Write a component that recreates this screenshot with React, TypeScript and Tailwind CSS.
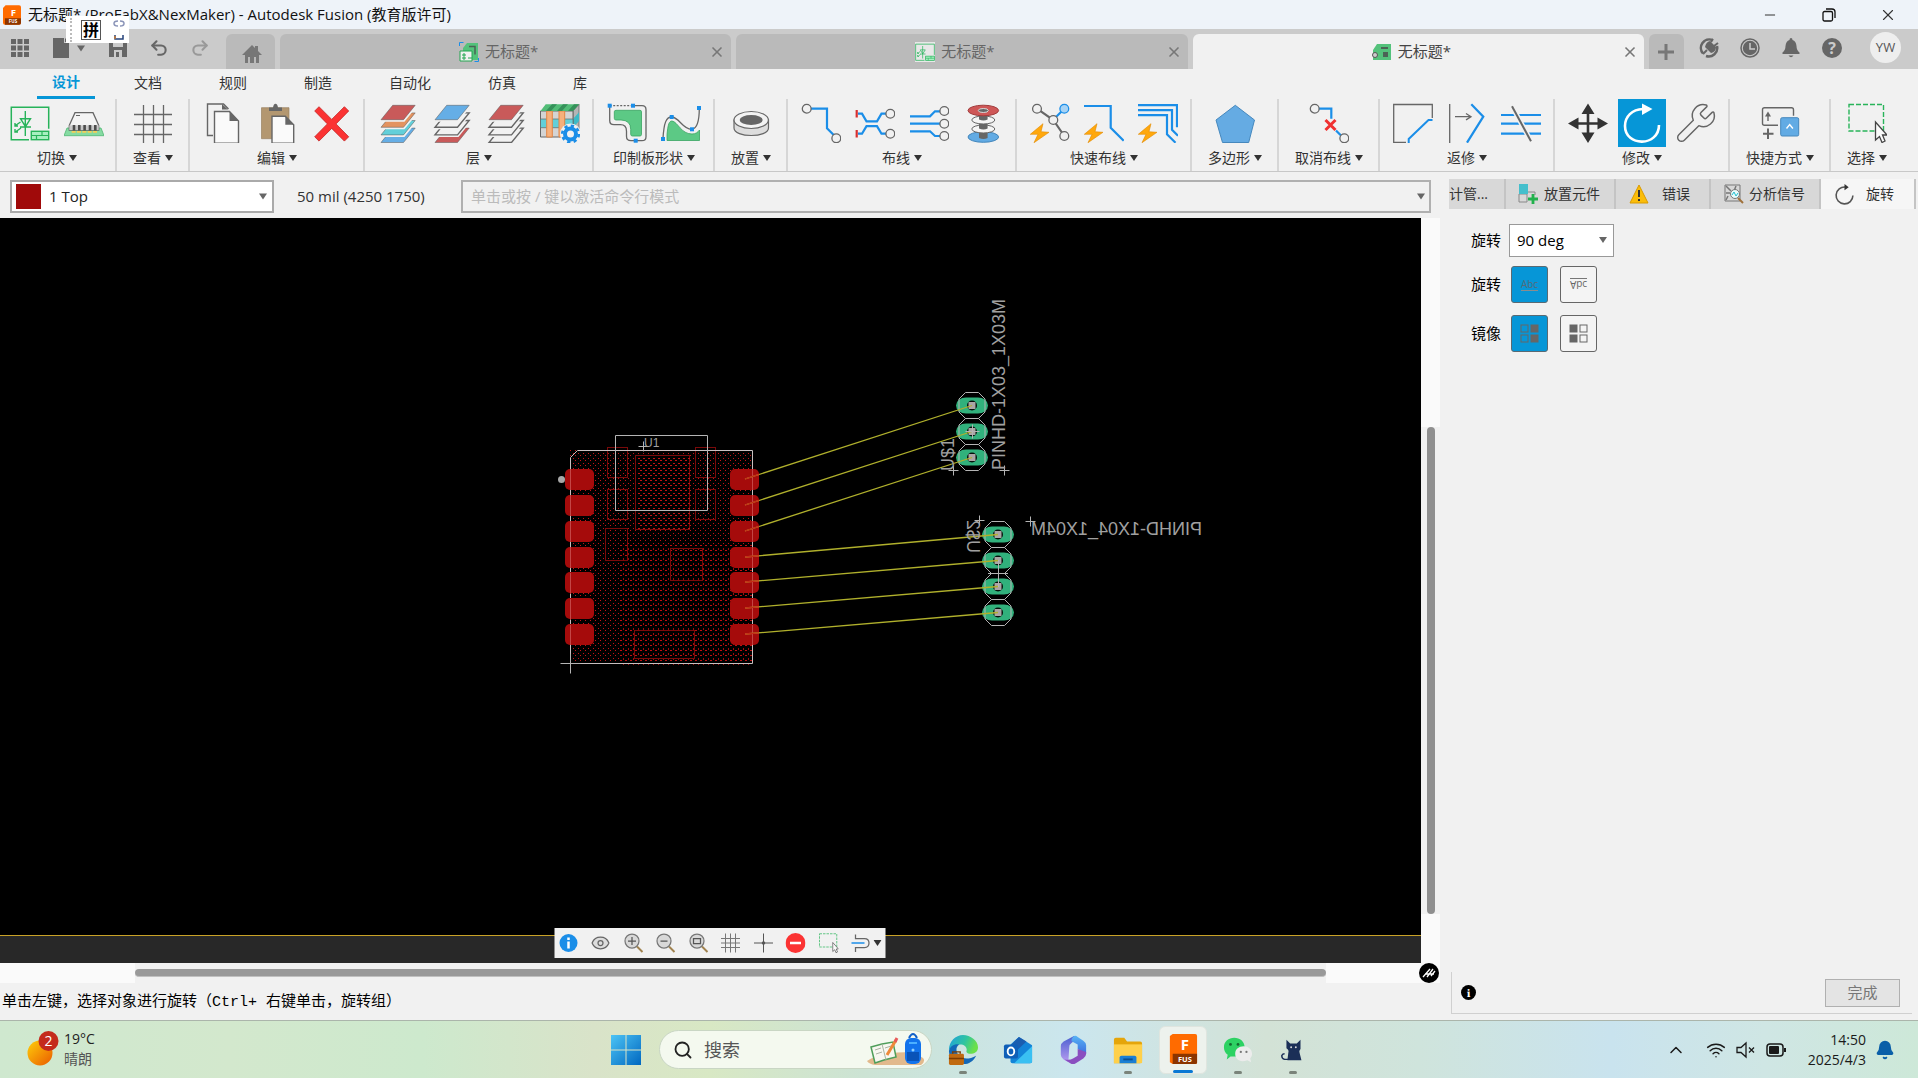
import React from "react";
import {
  Bell,
  ChevronUp,
  Eye,
  Minus,
  Redo2,
  Search,
  Undo2,
  Wifi,
  Wrench,
  X,
} from "lucide-react";

const GREY = "#666666";
const BLUE = "#1b8ee8";
const PAPER = "#f1f1f1";

function Icon({ children, className = "h-10 w-10" }: { children: React.ReactNode; className?: string }) {
  return (
    <svg viewBox="0 0 40 40" fill="none" className={className} aria-hidden="true">
      {children}
    </svg>
  );
}

/* ---------- ribbon icons ---------- */

function Schematic({ className }: { className?: string }) {
  return (
    <Icon className={className}>
      <path d="M19 36.7H1.3V4.3h37.4v21.5" stroke="#27b35a" strokeWidth="1.5" />
      <path d="M15.3 8v25M10.5 15.7h10l-5 8zM10 24h11M10.5 19l-5 3.5M5 20v3h3M11 25l-5 3.5M5 26v3h3" stroke="#27b35a" strokeWidth="1.4" />
      <rect x="21.3" y="28.3" width="17.4" height="8.4" fill="#a6efc0" stroke="#27b35a" strokeWidth="1.4" />
      <path d="M21.3 32.5h17.4M32 28.3v4.2M26.5 32.5v4.2" stroke="#27b35a" strokeWidth="1.2" />
    </Icon>
  );
}

function Chip() {
  return (
    <Icon>
      <path d="M3 25h34l3 7.7H0z" fill="#86dba2" stroke="#4fb873" strokeWidth="0.8" />
      <path d="M11 9.7h18l5.7 12.6v4.7H5.3v-4.7z" fill="#f4f4f4" stroke={GREY} strokeWidth="1.3" />
      <path d="M5.3 22.3h29.4v4.7H5.3z" fill="#c9c9c9" />
      {[8.7, 14, 19.3, 24.7, 30].map((x) => (
        <g key={x}>
          <rect x={x} y="22" width="2.6" height="5.5" fill="#4d4d4d" />
          <rect x={x - 1} y="28" width="4" height="1.8" fill="#f3cf5a" />
        </g>
      ))}
      <path d="M12 12.5h4" stroke={GREY} strokeWidth="1" />
    </Icon>
  );
}

function GridIcon() {
  return (
    <Icon>
      <path d="M10.5 2v38M20.5 2v38M30.5 2v38M1 11.5h38M1 21.5h38M1 31.5h38" stroke={GREY} strokeWidth="1.3" />
    </Icon>
  );
}

function Copy() {
  return (
    <Icon>
      <path d="M10 32.5H4.5v-31.500h16l5 5" stroke={GREY} strokeWidth="1.4" />
      <path d="M19 1l6 5.500h-6z" fill={GREY} />
      <path d="M11.5 8.5h15l9 9.500v22.300h-24z" fill="#fafafa" stroke={GREY} strokeWidth="1.4" />
      <path d="M26.5 8.5v9.500h9z" fill={GREY} />
    </Icon>
  );
}

function Paste() {
  return (
    <Icon>
      <path d="M4.5 4.7h27.500v31H4.5z" fill="#b39770" stroke="#9a8262" strokeWidth="0.7" />
      <path d="M12 4.5h4q.5-3.800 2.500-3.800t2.500 3.800h4v3.500h-13z" fill={GREY} />
      <path d="M15 13.3h13.300l8.400 8.400v18.600h-21.700z" fill="#fafafa" stroke={GREY} strokeWidth="1.4" />
      <path d="M28.3 13.3v8.400h8.400z" fill={GREY} />
    </Icon>
  );
}

function DeleteIcon() {
  return (
    <Icon>
      <path d="M8 3.7l12.700 12.700 12.700-12.700 4.300 4.300-12.700 12.900 12.700 12.900-4.300 4.300-12.700-12.700-12.700 12.700-4.300-4.300 12.700-12.900-12.700-12.900z" fill="#fb3333" stroke="#c42424" strokeWidth="0.8" />
    </Icon>
  );
}

function Layers({ colors }: { colors: string[] }) {
  return (
    <Icon>
      {[3, 2, 1, 0].map((i) => (
        <g key={i} transform={`translate(0 ${i * 7.6})`}>
          <path d="M14.7 2.3h22.500l-11.700 14.400h-22.500z" fill={PAPER} stroke={PAPER} strokeWidth="4" />
          <path
            d="M14.7 2.3h22.500l-11.700 14.400h-22.500z"
            fill={colors[i]}
            stroke={colors[i] === PAPER ? GREY : "#555555"}
            strokeWidth={colors[i] === PAPER ? 1.4 : 0.5}
          />
        </g>
      ))}
    </Icon>
  );
}

function LayerSettings() {
  return (
    <Icon>
      <path d="M33 8l6-6.700v26l-6 6.700z" fill="#b5b5b5" stroke={GREY} strokeWidth="0.8" />
      <path d="M33 16l6-6.700v8.700l-6 6.700z" fill="#3dbac6" />
      <path d="M.5 8h32.500v26H.5z" fill="#d4d4d4" stroke={GREY} strokeWidth="1" />
      <path d="M.5 16h32.500v8.700H.5z" fill="#62cfd9" stroke={GREY} strokeWidth="0.7" />
      <path d="M6.7 8h5.600v26h-5.600zM19 8h5.700v26h-5.700z" fill="#f6b07c" stroke="#e38543" strokeWidth="1" />
      <path d="M5.7 1.3h33.300l-6 6.700H.5z" fill="#52bd77" />
      <path d="M12 1.3h5l-6 6.700h-5zM23 1.3h5l-6 6.700h-5zM34 1.3h5l-6 6.700h-5z" fill="#35915a" />
      <circle cx="30.5" cy="31" r="10.5" fill={PAPER} />
      <circle cx="30.5" cy="31" r="5.5" stroke={BLUE} strokeWidth="4" />
      <circle cx="30.5" cy="31" r="8.3" stroke={BLUE} strokeWidth="2.6" strokeDasharray="3.26 3.26" />
    </Icon>
  );
}

function Square({ x, y }: { x: number; y: number }) {
  return <rect x={x - 2} y={y - 2} width="4" height="4" fill={BLUE} />;
}

function BoardShape() {
  return (
    <Icon>
      <path d="M9 7.3h24q1.500 0 1.500 1.500v22.500q0 1.700-1.500 1.700h-7.500q-1.800 0-1.800-1.700v-5q0-9-9.700-9.300h-5q-1.700 0-1.700-1.700v-6.500q0-1.500 1.700-1.500z" fill="#5cc985" stroke="#39a562" strokeWidth="0.8" />
      <path d="M2.7 2.7h23" stroke={GREY} strokeWidth="1.3" strokeDasharray="2 1.5" />
      <path d="M26 2.7h9q4 0 4 4v27q0 4-4 4h-11q-4.500 0-4.500-4.500v-5q0-6.500-6-6.500h-6.500q-4.300 0-4.300-4.200v-14.800" stroke={GREY} strokeWidth="1.3" />
      <Square x={2.7} y={2.7} />
      <Square x={26} y={2.7} />
      <Square x={28.7} y={37.7} />
    </Icon>
  );
}

function BoardCurve() {
  return (
    <Icon>
      <path d="M6 37.5v-6c1-10 2-13.500 5-13.500 6 1 9 13 20 13 4 0 6-2 7.500-4v10.500z" fill="#5cc985" stroke="#39a562" strokeWidth="0.8" />
      <path d="M2 35c1-15 3-21 8.700-21 7.300 0 11.300 13 20.300 12.300 6.500-1 7.300-12.300 7.300-21.300" stroke={GREY} strokeWidth="1.3" />
      <Square x={2} y={36} />
      <Square x={10.7} y={14} />
      <Square x={31} y={26.3} />
      <Square x={38} y={5} />
    </Icon>
  );
}

function Ring() {
  return (
    <Icon>
      <path d="M3 17v8c0 10 34.500 10 34.500 0v-8z" fill="#dddddd" stroke={GREY} strokeWidth="1.2" />
      <ellipse cx="20.2" cy="17" rx="17.2" ry="8.5" fill="#f3f3f3" stroke={GREY} strokeWidth="1.2" />
      <ellipse cx="20.2" cy="17" rx="11.5" ry="5" fill={GREY} />
    </Icon>
  );
}

function Node({ x, y, fill = PAPER, stroke = GREY }: { x: number; y: number; fill?: string; stroke?: string }) {
  return <circle cx={x} cy={y} r="4.4" fill={fill} stroke={stroke} strokeWidth="1.3" />;
}

function Route() {
  return (
    <Icon>
      <path d="M10 5.7h16v19.600l7 7" stroke={BLUE} strokeWidth="2.2" />
      <Node x={5.7} y={5.7} />
      <Node x={35.3} y={35.3} />
    </Icon>
  );
}

function RoutePair() {
  return (
    <Icon>
      <path d="M3 10.7h4l4.500 7.600h10.500l4.500-7.600h5M3 30.7h4l4.500-7.600h10.500l4.500 7.600h5" stroke={BLUE} strokeWidth="2.2" />
      <path d="M1.7 7v7.500M1.7 27v7.500" stroke="#d93030" strokeWidth="2.2" />
      <Node x={35.3} y={10.7} />
      <Node x={35.3} y={30.7} />
    </Icon>
  );
}

function RouteMulti() {
  return (
    <Icon>
      <path d="M1 13.3h20l5-5h6M1 20.7h31M1 28.3h20l5 4.700h6" stroke={BLUE} strokeWidth="2.2" />
      <Node x={35.3} y={8} />
      <Node x={35.3} y={20.7} />
      <Node x={35.3} y={33} />
    </Icon>
  );
}

function Via() {
  return (
    <Icon>
      <ellipse cx="20.3" cy="34" rx="15.3" ry="5.3" fill="#62abe4" stroke="#4386bb" />
      <path d="M16 28h8.600v7q-4 2-8.600 0z" fill={GREY} />
      <ellipse cx="20.3" cy="26" rx="11.5" ry="4" fill="#f5f5f5" stroke={GREY} />
      <path d="M16 19h8.600v6.500q-4 2-8.600 0z" fill={GREY} />
      <ellipse cx="20.3" cy="17" rx="11.5" ry="4" fill="#f5f5f5" stroke={GREY} />
      <path d="M16 11h8.600v5.500q-4 2-8.600 0z" fill={GREY} />
      <ellipse cx="20.3" cy="7.5" rx="15.3" ry="5.3" fill="#ce5757" stroke="#a13d3d" />
      <ellipse cx="20.3" cy="7.5" rx="5" ry="2" fill={GREY} stroke="#d9d9d9" />
    </Icon>
  );
}

function Bolt() {
  return <path d="M13 20.7l-12.700 10.600h7.700l-4 8.400 15-10.400-8-.6z" fill="#ffa80d" stroke="#e08a00" strokeWidth="0.6" />;
}

function QuickNet() {
  return (
    <Icon>
      <path d="M7 5.7l16.300 11.300 11 16" stroke={GREY} strokeWidth="2.2" />
      <path d="M24 16l10-10" stroke={BLUE} strokeWidth="2.2" />
      <Node x={7} y={5.7} />
      <Node x={23.3} y={17} />
      <Node x={34.3} y={5.7} fill="#a7d3f5" stroke={BLUE} />
      <Node x={34.3} y={33} />
      <Bolt />
    </Icon>
  );
}

function QuickRoute() {
  return (
    <Icon>
      <path d="M0 3h26.700v21.700l13 13" stroke={BLUE} strokeWidth="2.2" />
      <Bolt />
    </Icon>
  );
}

function QuickMulti() {
  return (
    <Icon>
      <path d="M0 2.2h39v22M0 7.2h34v19.500l6 6M0 12.2h29v19l8.500 8.500" stroke={BLUE} strokeWidth="2.2" />
      <Bolt />
    </Icon>
  );
}

function Pentagon() {
  return (
    <Icon>
      <path d="M20.3 2.3l19.200 14.700-5.800 22.500h-26.200l-6.500-22.500z" fill="#65abe3" stroke="#4688bd" />
    </Icon>
  );
}

function Unroute() {
  return (
    <Icon>
      <path d="M10 5.7h12.300v10M27 27.5l6 6" stroke={BLUE} strokeWidth="2.2" />
      <path d="M16.5 17l10 10M26.5 17l-10 10" stroke="#f03030" strokeWidth="3" />
      <Node x={5.7} y={5.7} />
      <Node x={35.3} y={35.3} />
    </Icon>
  );
}

function Miter() {
  return (
    <Icon>
      <path d="M13 39.3h-12.300v-37.800h38.600v13.500" stroke={GREY} strokeWidth="1.3" />
      <path d="M39.5 17h-4l-19.800 19v4" stroke={BLUE} strokeWidth="2" />
    </Icon>
  );
}

function Reroute() {
  return (
    <Icon>
      <path d="M2.7 1v39M8 13.7h15M19 10.5l5 3.200-5 3.200" stroke={GREY} strokeWidth="1.3" />
      <path d="M24.3 1.3l12 12.400-16.300 26" stroke={BLUE} strokeWidth="2.2" />
    </Icon>
  );
}

function Slice() {
  return (
    <Icon>
      <path d="M0 12h40M0 20.7h40M0 30.7h40" stroke={BLUE} strokeWidth="2.2" />
      <path d="M11 3.3l19 35" stroke={PAPER} strokeWidth="5" />
      <path d="M11 3.3l19 35" stroke={GREY} strokeWidth="2" />
    </Icon>
  );
}

function Move() {
  return (
    <Icon>
      <path d="M20 6v29M5 20.5h30" stroke="#333333" strokeWidth="2.6" />
      <path d="M20 .5l6.500 10.500h-13zM20 40l6.500-10.500h-13zM0 20.5l10.500-6v12zM40 20.5l-10.500-6v12z" fill="#333333" />
    </Icon>
  );
}

function Rotate() {
  return (
    <Icon>
      <path d="M37 22c0 22-34 22-34 1 0-9.500 7-16.500 18-17" stroke="#ffffff" strokeWidth="2.6" />
      <path d="M20 .5l10.500 5.500-10.500 6z" fill="#ffffff" />
    </Icon>
  );
}

function Shortcut() {
  return (
    <Icon>
      <path d="M18 22.3h-13.500q-2 0-2-2v-13.500q0-2 2-2h27q2 0 2 2v6M8 18v-7" stroke={GREY} strokeWidth="1.4" />
      <path d="M8 8.5l3 5h-6z" fill={GREY} />
      <path d="M8 25.5v10.500M3 30.7h10.500" stroke={GREY} strokeWidth="2" />
      <rect x="20.7" y="14.7" width="18" height="18.3" rx="1.5" fill="#62abe4" stroke="#4688bd" />
      <path d="M26.5 25.5l3.200-4 3.200 4" stroke="#ffffff" strokeWidth="1.4" />
    </Icon>
  );
}

function SelectBox({ className }: { className?: string }) {
  return (
    <Icon className={className}>
      <rect x="2" y="1.5" width="34.5" height="26.5" stroke="#28b45a" strokeWidth="1.4" strokeDasharray="5 2" />
      <path d="M28.5 19v18l4-3.500 2.500 6 3-1.500-2.500-6h4.500z" fill="#fafafa" stroke="#444444" strokeWidth="1.3" />
    </Icon>
  );
}

/* ---------- shared pieces ---------- */

function Caret({ className = "h-[6px] w-2 fill-[#333333]" }: { className?: string }) {
  return (
    <svg viewBox="0 0 8 6" className={className} aria-hidden="true">
      <path d="M0 0h8l-4 6z" />
    </svg>
  );
}

function FusionLogo({ className }: { className: string }) {
  return (
    <svg viewBox="0 0 28 30" className={className} aria-hidden="true">
      <path d="M4 0h21q3 0 3 3v24q0 3-3 3H3q-3 0-3-3V4z" fill="#ff6b00" />
      <path d="M3 20h25v7q0 3-3 3H3z" fill="#8c3500" />
      <text x="16" y="16" fontSize="15" fontWeight="700" textAnchor="middle" fill="#ffffff">F</text>
      <text x="15.5" y="28" fontSize="7" fontWeight="700" textAnchor="middle" fill="#ffffff">FUS</text>
    </svg>
  );
}

const groups: { label: string; icons: React.ReactNode[]; names: string[] }[] = [
  { label: "切换", names: ["原理图", "三维印制板"], icons: [<Schematic />, <Chip />] },
  { label: "查看", names: ["栅格"], icons: [<GridIcon />] },
  { label: "编辑", names: ["复制", "粘贴", "删除"], icons: [<Copy />, <Paste />, <DeleteIcon />] },
  {
    label: "层",
    names: ["所有层", "顶层和底层", "顶层", "层设置"],
    icons: [
      <Layers colors={["#c95a5a", "#e39360", "#62cfd9", "#65aee6"]} />,
      <Layers colors={["#65aee6", PAPER, PAPER, "#c95a5a"]} />,
      <Layers colors={["#c95a5a", PAPER, PAPER, PAPER]} />,
      <LayerSettings />,
    ],
  },
  { label: "印制板形状", names: ["轮廓", "样条"], icons: [<BoardShape />, <BoardCurve />] },
  { label: "放置", names: ["孔"], icons: [<Ring />] },
  { label: "布线", names: ["手动布线", "差分对", "多线布线", "过孔"], icons: [<Route />, <RoutePair />, <RouteMulti />, <Via />] },
  { label: "快速布线", names: ["快速飞线", "快速走线", "快速多线"], icons: [<QuickNet />, <QuickRoute />, <QuickMulti />] },
  { label: "多边形", names: ["覆铜"], icons: [<Pentagon />] },
  { label: "取消布线", names: ["取消"], icons: [<Unroute />] },
  { label: "返修", names: ["斜接", "重新布线", "切割"], icons: [<Miter />, <Reroute />, <Slice />] },
  {
    label: "修改",
    names: ["移动", "旋转对象", "更改"],
    icons: [<Move />, <Rotate />, <Wrench className="h-11 w-11 text-[#666666]" strokeWidth={0.8} />],
  },
  { label: "快捷方式", names: ["添加快捷方式"], icons: [<Shortcut />] },
  { label: "选择", names: ["选择组"], icons: [<SelectBox />] },
];

function Ribbon() {
  return (
    <div className="flex h-[73px] border-b border-[#c8c8c8]">
      {groups.map((g) => (
        <section
          key={g.label}
          className="flex flex-col items-center justify-between border-r-2 border-[#d6d6d6] pr-[5px] pb-[3px] pl-[6px] first:pl-[3px] first:pr-[4px] last:border-r-0"
        >
          <div className="flex">
            {g.icons.map((icon, i) => (
              <button
                key={g.names[i]}
                aria-label={g.names[i]}
                className="flex h-[48px] w-[54px] items-center justify-center"
              >
                <span
                  className={
                    g.names[i] === "旋转对象"
                      ? "flex h-[48px] w-[48px] items-center justify-center bg-[#0696d7]"
                      : "flex h-[48px] w-[48px] items-center justify-center"
                  }
                >
                  {icon}
                </span>
              </button>
            ))}
          </div>
          <button className="flex items-center gap-1 px-[10px] text-sm leading-5 whitespace-nowrap">
            {g.label}
            <Caret />
          </button>
        </section>
      ))}
    </div>
  );
}

/* ---------- header ---------- */

function DocTab({ active = false, icon }: { active?: boolean; icon: React.ReactNode }) {
  return (
    <div
      className={
        active
          ? "flex flex-1 items-center rounded-t-md bg-[#f1f1f1] pr-[6px] text-[#444444]"
          : "flex flex-1 items-center rounded-t-md bg-[#bababa] pr-[6px] text-[#666666]"
      }
    >
      <button className="flex flex-1 items-center justify-center gap-[6px] pl-2 text-[15px]">
        {icon}
        无标题*
      </button>
      <button aria-label="关闭标签">
        <X className="h-4 w-4 text-[#777777]" strokeWidth={2.5} />
      </button>
    </div>
  );
}

function BoardTabIcon() {
  return (
    <svg viewBox="0 0 20 18" className="h-[18px] w-5" aria-hidden="true">
      <path d="M5 1h14v16H1V7z" fill="#54c27b" />
      <path d="M9 4h7v2H9zM11 9h5v5h-5z" fill="#4b6355" />
      <circle cx="3" cy="12" r="2.5" fill="#cccccc" stroke="#555555" />
    </svg>
  );
}

function TabBar() {
  return (
    <div className="flex h-10 bg-[#cbcbcb] pt-[5px] text-[#666666]">
      <div className="flex w-[226px] items-center pb-[7px] pl-[10px]">
        <button aria-label="数据面板">
          <svg viewBox="0 0 20 20" className="h-5 w-5" fill="#666666" aria-hidden="true">
            {[1, 7.5, 14].map((y) => [1, 7.5, 14].map((x) => <rect key={`${x}-${y}`} x={x} y={y} width="5" height="5" />))}
          </svg>
        </button>
        <button aria-label="文件" className="ml-[22px] flex items-center gap-[7px]">
          <svg viewBox="0 0 18 22" className="h-[22px] w-[18px]" fill="#666666" aria-hidden="true">
            <path d="M1 1h11v5h5v15H1zM13 1l4 4h-4z" />
          </svg>
          <Caret className="h-[7px] w-2 fill-[#666666]" />
        </button>
        <button aria-label="保存" className="ml-[23px]">
          <svg viewBox="0 0 20 20" className="h-5 w-5" fill="#666666" fillRule="evenodd" aria-hidden="true">
            <path d="M1 1h15l3 3v15H1zM5 3v6h10V3zM6 12v7h8v-7zM8 14h3v5H8z" />
          </svg>
        </button>
        <button aria-label="撤消" className="ml-[21px]">
          <Undo2 className="h-5 w-5" strokeWidth={2.5} />
        </button>
        <button aria-label="恢复" className="ml-[21px] text-[#999999]">
          <Redo2 className="h-5 w-5" strokeWidth={2.5} />
        </button>
      </div>
      <div className="flex flex-1 gap-[5px]">
        <button aria-label="主页" className="flex w-[49px] items-center justify-center rounded-t-md bg-[#bababa]">
          <svg viewBox="0 0 20 18" className="mt-1 ml-[3px] h-[18px] w-5" fill="#777777" aria-hidden="true">
            <path d="M10 0l3 3V1h3v5l4 4h-3v8h-3v-6h-2v6H8v-6H6v6H3v-8H0z" />
          </svg>
        </button>
        <DocTab
          icon={
            <svg viewBox="0 0 20 20" className="h-5 w-5" fill="none" aria-hidden="true">
              <path d="M8 1h11v17H4V6z" fill="#54c27b" />
              <path d="M10 4.500h6v8" stroke="#4b6355" strokeWidth="1.5" />
              <path d="M1 9h12v10H1z" fill="#f1f1f1" stroke="#22a650" />
              <path d="M5 11v7M3 13h4M3 16h4M9 16h4" stroke="#22a650" />
              <path d="M.5 4V.5h4M15.500 19.5h4V16" stroke={BLUE} />
            </svg>
          }
        />
        <DocTab icon={<Schematic className="h-5 w-5 bg-[#e8e8e8]" />} />
        <DocTab active icon={<BoardTabIcon />} />
        <button aria-label="新建标签" className="flex w-[35px] items-center justify-center rounded-t-md bg-[#bababa]">
          <svg viewBox="0 0 16 16" className="h-4 w-4" aria-hidden="true">
            <path d="M8 0v16M0 8h16" stroke="#777777" strokeWidth="3" />
          </svg>
        </button>
      </div>
      <div className="flex w-[234px] items-center gap-[21px] pb-[8px] pl-[15px]">
        <button aria-label="扩展">
          <svg viewBox="0 0 20 20" className="h-5 w-5" fill="none" aria-hidden="true">
            <path d="M13.500 2A8.500 8.500 0 0 0 4 15.500M7 18a8.500 8.500 0 0 0 11-10" stroke="#666666" strokeWidth="2.5" />
            <path d="M4 16l4-4M12 4l2-3M15 8l4-3" stroke="#666666" strokeWidth="2" />
            <path d="M6 9l6 6q5-1 5-6l-6-6q-4 1-5 6z" fill="#666666" />
          </svg>
        </button>
        <button aria-label="作业状态">
          <svg viewBox="0 0 20 20" className="h-5 w-5" fill="none" aria-hidden="true">
            <circle cx="10" cy="10" r="9" stroke="#666666" strokeWidth="1.5" />
            <circle cx="10" cy="10" r="7.2" fill="#666666" />
            <path d="M10 5v6h5" stroke="#cbcbcb" strokeWidth="1.5" />
          </svg>
        </button>
        <button aria-label="通知">
          <svg viewBox="0 0 20 20" className="h-5 w-5" fill="#666666" aria-hidden="true">
            <path d="M10 0q1.500 0 1.500 2Q15 3 15.500 8q0 4 3 6.500v1.500H1.500v-1.500Q4.500 12 4.500 8 5 3 8.500 2 8.500 0 10 0zM7.500 17.500h5q-2.500 3.500-5 0z" />
          </svg>
        </button>
        <button aria-label="帮助" className="flex h-5 w-5 items-center justify-center rounded-full bg-[#666666] text-base font-bold text-[#cbcbcb]">
          ?
        </button>
        <button className="ml-[7px] flex h-[31px] w-[31px] items-center justify-center rounded-full bg-[#eeeeee] text-[13px] text-[#555555]">
          YW
        </button>
      </div>
    </div>
  );
}

function TitleBar() {
  return (
    <header className="relative flex h-[29px] items-center bg-[#eef3f9] pr-px pl-[3px]">
      <FusionLogo className="h-5 w-[18px]" />
      <h1 className="ml-[7px] flex-1 text-[15px] text-[#111111]">无标题* (ProFabX&amp;NexMaker) - Autodesk Fusion (教育版许可)</h1>
      <button aria-label="最小化" className="flex w-[59px] justify-center">
        <Minus className="h-4 w-4" strokeWidth={1.5} />
      </button>
      <button aria-label="还原" className="flex w-[59px] justify-center">
        <svg viewBox="0 0 14 14" className="h-[14px] w-[14px]" fill="none" stroke="#111111" strokeWidth="1.3" aria-hidden="true">
          <rect x="1" y="3.5" width="9.5" height="9.5" rx="1.5" />
          <path d="M4 1h6q3 0 3 3v6" />
        </svg>
      </button>
      <button aria-label="关闭" className="flex w-[59px] justify-center">
        <X className="h-[18px] w-[18px]" strokeWidth={1.5} />
      </button>
      <div className="absolute top-4 left-[66px] z-10 flex h-[27px] w-[63px] items-center bg-white pl-1">
        <span className="h-6 border-l-2 border-dotted border-[#bbbbbb]" />
        <span className="ml-[9px] flex h-5 w-5 items-center justify-center border border-[#555555] text-base leading-4 font-bold text-black">拼</span>
        <svg viewBox="0 0 12 24" className="ml-3 h-6 w-3" fill="none" aria-hidden="true">
          <path d="M5 3q-4 0-4 2.500T5 8M7 3q4 0 4 2.500T7 8" stroke="#8a94b8" strokeWidth="1.5" />
          <path d="M2 17v4h8v-4" stroke="#24427a" strokeWidth="1.5" />
          <path d="M2 18v3" stroke="#c77a35" strokeWidth="1.5" />
        </svg>
      </div>
    </header>
  );
}

function MenuTabs() {
  return (
    <nav className="flex h-[30px] items-start pl-[37px] text-sm">
      <a href="#design" className="flex h-[30px] w-[58px] items-center justify-center border-b-[3px] border-[#0696d7] pb-px font-bold text-[#0696d7]">
        设计
      </a>
      <div className="ml-[39px] flex h-[27px] items-center gap-[57px]">
        {["文档", "规则", "制造", "自动化", "仿真", "库"].map((t, i) => (
          <a key={t} href={`#menu-${i}`}>
            {t}
          </a>
        ))}
      </div>
    </nav>
  );
}

/* ---------- board canvas ---------- */

const padRows = [469, 495, 521, 547, 572, 598, 624];
const courtyards = [
  [607.5, 447.5, 20, 30],
  [695.5, 447.5, 20, 30],
  [607.5, 489.5, 20, 30],
  [695.5, 489.5, 20, 30],
  [635.5, 455.5, 54, 74],
  [605.5, 528.5, 22, 32],
  [670.5, 548.5, 32, 32],
  [634.5, 630.5, 60, 28],
];
const airwires = [
  [479, 972, 405.5],
  [505, 972, 431.5],
  [531, 972, 457.5],
  [557, 998, 534.5],
  [582, 998, 560.5],
  [608, 998, 586.5],
  [634, 998, 612.5],
];

function Cross({ x, y, r = 5 }: { x: number; y: number; r?: number }) {
  return <path d={`M${x - r} ${y}h${2 * r}M${x} ${y - r}v${2 * r}`} stroke="#b4b4b4" />;
}

function Header({ x, y, pins }: { x: number; y: number; pins: number }) {
  return (
    <>
      {Array.from({ length: pins }, (_, i) => (
        <g key={i} transform={`translate(${x} ${y + i * 26})`}>
          <rect x="-16" y="-8" width="32" height="16" rx="10" ry="8" fill="#31b17c" />
          <circle r="5" fill="#05100b" />
          <rect x="-3.5" y="-3.5" width="7" height="7" fill="#aaa5a5" />
          <path d="M-6.500-13h13l6.500 6.500v13l-6.500 6.500h-13l-6.500-6.500v-13z" fill="none" stroke="#b4b4b4" />
        </g>
      ))}
    </>
  );
}

function Board() {
  return (
    <svg viewBox="0 218 1421 745" preserveAspectRatio="xMinYMax slice" className="absolute inset-0 h-full w-full" role="img" aria-label="印制板">
      <defs>
        <pattern id="fine" width="5" height="5" patternUnits="userSpaceOnUse">
          <rect width="1" height="1" fill="#c41414" />
          <rect x="3" y="3" width="1" height="1" fill="#c41414" />
        </pattern>
        <pattern id="coarse" width="5" height="5" patternUnits="userSpaceOnUse">
          <rect width="2" height="1" fill="#c01010" />
          <rect x="3" y="3" width="1" height="2" fill="#a00c0c" />
        </pattern>
      </defs>
      <rect y="936" width="1421" height="27" fill="#282828" />
      <path d="M0 935.5h1421" stroke="#c9a227" />
      <rect x="570" y="450" width="182" height="95" fill="url(#fine)" />
      <rect x="570" y="545" width="50" height="120" fill="url(#fine)" />
      <rect x="620" y="545" width="132" height="120" fill="url(#coarse)" />
      {courtyards.map(([x, y, w, h]) => (
        <rect key={`${x}-${y}`} x={x} y={y} width={w} height={h} fill="none" stroke="#7a0a0a" />
      ))}
      <rect x="636" y="456" width="53" height="73" fill="url(#fine)" transform="translate(1 0)" />
      <path d="M577.5 450.5h175v213h-182v-206z" fill="none" stroke="#c8c0c0" />
      <path d="M615.5 435.5h92v75h-92z" fill="none" stroke="#b4b4b4" />
      {padRows.map((y) => (
        <g key={y}>
          <rect x="565" y={y} width="29" height="21" rx="5" fill="#a50b0b" />
          <rect x="730" y={y} width="29" height="21" rx="5" fill="#a50b0b" />
        </g>
      ))}
      <path d="M570.5 469v176M752.5 469v176" stroke="#c44545" strokeDasharray="21 5" />
      <circle cx="561.5" cy="479.5" r="3.5" fill="#a8a8a8" />
      <Cross x={570.5} y={663.5} r={10} />
      <Cross x={643.5} y={446.5} />
      <text x="644" y="447" fontSize="12" fill="#a0a0a0">U1</text>

      <Header x={972} y={405.5} pins={3} />
      <Header x={998} y={534.5} pins={4} />
      {airwires.map(([y, x2, y2]) => (
        <g key={y}>
          <path d={`M745 ${y}L${x2} ${y2}`} stroke="#b0b02c" strokeWidth="1.3" />
          <path d={`M745 ${y}l14 ${((y2 - y) * 14) / (x2 - 745)}`} stroke="#c42c18" strokeWidth="1.3" />
        </g>
      ))}
      <Cross x={972.5} y={431.5} r={7} />
      <path d="M988 573.5h20M998.5 560v27" stroke="#b4b4b4" />
      <Cross x={953.5} y={470.5} />
      <Cross x={1004.5} y={470.5} />
      <Cross x={979.5} y={520.5} />
      <Cross x={1030.5} y={521.5} />
      <g fontSize="18" fill="#a0a0a0">
        <text transform="translate(954 471) rotate(-90)">U$1</text>
        <text transform="translate(1005 470) rotate(-90)">PINHD-1X03_1X03M</text>
        <text transform="matrix(0 -1 -1 0 967 553)">U$2</text>
        <text transform="matrix(-1 0 0 1 1202 535)">PINHD-1X04_1X04M</text>
      </g>
    </svg>
  );
}

function Magnifier({ d }: { d: string }) {
  return (
    <Icon className="h-5 w-5">
      <path d="M27 27l11 11" stroke="#a0824f" strokeWidth="4" />
      <circle cx="17" cy="16" r="14" fill="#d8d8d8" stroke="#777777" strokeWidth="2.5" />
      <path d={d} stroke="#555555" strokeWidth="2.5" />
    </Icon>
  );
}

function FloatingToolbar() {
  const items: [string, React.ReactNode][] = [
    ["信息", <Icon className="h-5 w-5"><circle cx="20" cy="20" r="18" fill={BLUE} /><path d="M20 9v5M20 17v14" stroke="#ffffff" strokeWidth="5" /></Icon>],
    ["显示", <Eye className="h-5 w-5 fill-[#dddddd] text-[#666666]" strokeWidth={1.5} />],
    ["放大", <Magnifier d="M9 16h16M17 8v16" />],
    ["缩小", <Magnifier d="M10 16h14" />],
    ["适合窗口", <Magnifier d="M10 11h14v10H10z" />],
    ["栅格设置", <Icon className="h-5 w-5"><path d="M10 1v38M20 1v38M30 1v38M1 11h38M1 20h38M1 29h38" stroke="#777777" strokeWidth="2" /></Icon>],
    ["原点", <Icon className="h-5 w-5"><path d="M20 1v38M1 20h38" stroke="#555555" strokeWidth="2" /><circle cx="20" cy="20" r="3.5" fill="#555555" /></Icon>],
    ["停止", <Icon className="h-5 w-5"><circle cx="20" cy="20" r="20" fill="#fb3333" /><path d="M9 20h22" stroke="#ffffff" strokeWidth="5" /></Icon>],
    ["框选", <SelectBox className="h-5 w-5" />],
  ];
  return (
    <div className="absolute bottom-[5px] left-1/2 flex h-[30px] w-[331px] -translate-x-1/2 items-center justify-between bg-[#f1f1f1] px-1">
      {items.map(([name, icon]) => (
        <button key={name} aria-label={name}>{icon}</button>
      ))}
      <button aria-label="选择过滤器" className="flex items-center gap-[3px]">
        <Icon className="h-5 w-5">
          <path d="M10 3v8h18q9 0 9 9t-9 9H10v9" stroke="#666666" strokeWidth="2.5" />
          <path d="M2 20h26" stroke={BLUE} strokeWidth="3" />
        </Icon>
        <Caret />
      </button>
    </div>
  );
}

/* ---------- side panel ---------- */

function PanelTab({ children, active = false, className = "" }: { children: React.ReactNode; active?: boolean; className?: string }) {
  return (
    <button
      role="tab"
      aria-selected={active}
      className={`flex h-[30px] items-center border-r-2 border-[#c4c4c4] text-sm whitespace-nowrap ${active ? "bg-[#f6f6f6]" : "bg-[#d8d8d8]"} ${className}`}
    >
      {children}
    </button>
  );
}

function OptionRow({ label, children }: { label: string; children: React.ReactNode }) {
  return (
    <div className="flex items-center">
      <span className="w-10 text-[15px] text-black">{label}</span>
      {children}
    </div>
  );
}

function Toggle({ on = false, label, children }: { on?: boolean; label: string; children: React.ReactNode }) {
  return (
    <button
      aria-label={label}
      aria-pressed={on}
      className={`mr-3 flex h-[37px] w-[37px] items-center justify-center rounded-[3px] border ${on ? "border-[#5a6a73] bg-[#0696d7]" : "border-[#666666] bg-[#f4f4f4]"}`}
    >
      {children}
    </button>
  );
}

function Squares({ flip = false }: { flip?: boolean }) {
  const solid = flip ? 1 : 11;
  const open = flip ? 11 : 1;
  return (
    <svg viewBox="0 0 19 19" className="h-[19px] w-[19px]" aria-hidden="true">
      {[1, 11].map((y) => (
        <g key={y} stroke="#666666">
          <rect x={solid} y={y} width="7" height="7" fill="#666666" />
          <rect x={open} y={y} width="7" height="7" fill="none" />
        </g>
      ))}
    </svg>
  );
}

function SidePanel() {
  return (
    <aside className="flex w-[469px] shrink-0 flex-col pt-[7px]">
      <div role="tablist" className="flex">
        <PanelTab className="w-[57px]">计管...</PanelTab>
        <PanelTab className="w-[110px] gap-[6px] pl-[12px]">
          <svg viewBox="0 0 20 20" className="h-5 w-5" fill="none" aria-hidden="true">
            <path d="M1 10h8v8H1zM10 8h7v3" stroke="#888888" />
            <rect x="1" width="9" height="10" fill="#45bfcc" />
            <path d="M15 10v10M10 15h10" stroke="#22b14c" strokeWidth="2.8" />
          </svg>
          放置元件
        </PanelTab>
        <PanelTab className="w-[95px] gap-[13px] pl-[13px]">
          <svg viewBox="0 0 20 20" className="h-5 w-5" fill="none" aria-hidden="true">
            <path d="M10 1l9 18H1z" fill="#fbbd0a" stroke="#d99a00" />
            <path d="M10 6v7M10 15v2" stroke="#333333" strokeWidth="2" />
          </svg>
          错误
        </PanelTab>
        <PanelTab className="w-[110px] gap-[5px] pl-[13px]">
          <svg viewBox="0 0 20 20" className="h-5 w-5" fill="none" aria-hidden="true">
            <path d="M1 1h15v16H1z" stroke="#777777" />
            <path d="M2 2l5 5M12 2l-2 5M2 9h4M4 12l-2 4" stroke="#777777" strokeWidth="1.5" />
            <path d="M14 14l5 5" stroke="#a0713a" strokeWidth="2" />
            <circle cx="11" cy="10" r="4.5" fill="#eafafa" stroke="#777777" />
            <path d="M8 11l2-3 2 4 2-3" stroke="#22bfcf" />
          </svg>
          分析信号
        </PanelTab>
        <PanelTab active className="w-[95px] gap-[11px] pl-[13px]">
          <svg viewBox="0 0 20 20" className="h-[21px] w-[21px]" fill="none" aria-hidden="true">
            <path d="M18 11a8 8 0 1 1-7-8" stroke="#555555" strokeWidth="1.5" />
            <path d="M10 0l4 3-4 3z" fill="#333333" />
          </svg>
          旋转
        </PanelTab>
      </div>
      <div className="flex flex-1 flex-col pt-[15px] pl-[22px]">
        <div className="mb-[9px] flex items-center">
          <label htmlFor="angle" className="w-[38px] text-[15px] text-black">旋转</label>
          <div className="relative">
            <select id="angle" className="h-[33px] w-[105px] appearance-none border border-[#999999] bg-white pl-[7px] text-[15px] text-black">
              <option>90 deg</option>
            </select>
            <Caret className="pointer-events-none absolute top-[13px] right-[7px] h-[6px] w-2 fill-[#666666]" />
          </div>
        </div>
        <div className="flex flex-col gap-3">
          <OptionRow label="旋转">
            <Toggle on label="正向">
              <span className="border-b border-[#8c8c8c] text-[10px] leading-3 text-[#556b78]">Abc</span>
            </Toggle>
            <Toggle label="倒置">
              <span className="-scale-y-100 border-b border-[#777777] text-[10px] leading-3 text-[#666666]">Abc</span>
            </Toggle>
          </OptionRow>
          <OptionRow label="镜像">
            <Toggle on label="不镜像"><Squares /></Toggle>
            <Toggle label="镜像"><Squares flip /></Toggle>
          </OptionRow>
        </div>
      </div>
      <div className="mr-[6px] mb-[6px] ml-[2px] flex h-[42px] items-center justify-between border-b border-l border-[#d0d0d0] pr-[12px] pl-[9px]">
        <button aria-label="信息" className="flex h-[15px] w-[15px] items-center justify-center rounded-full bg-black font-serif text-xs leading-3 font-bold text-white">
          i
        </button>
        <button className="h-[28px] w-[75px] border border-[#b0b0b0] bg-[#e4e4e4] text-[15px] text-[#777777]">完成</button>
      </div>
    </aside>
  );
}

/* ---------- taskbar ---------- */

function TaskButton({ name, children, dot = false, active = false }: { name: string; children: React.ReactNode; dot?: boolean; active?: boolean }) {
  return (
    <button
      aria-label={name}
      className={`mr-[7px] flex h-12 w-12 flex-col items-center justify-end rounded-md ${active ? "border border-[#dfe5df] bg-[#edf2ed]" : ""}`}
    >
      <svg viewBox="0 0 32 32" className="h-[30px] w-[30px]" fill="none" aria-hidden="true">{children}</svg>
      <span
        className={
          active
            ? "mt-[6px] h-[3px] w-5 rounded-full bg-[#0a78d4]"
            : dot
              ? "mt-[6px] h-[3px] w-2 rounded-full bg-[#7a837a]"
              : "mt-[6px] h-[3px] w-2"
        }
      />
    </button>
  );
}

function Taskbar() {
  return (
    <footer className="grid h-[58px] shrink-0 grid-cols-[1fr_auto_1fr] items-center border-t border-[#abb5ab] bg-[linear-gradient(90deg,#cfe8cf_0%,#d3e8cd_12%,#cde9cd_22%,#d9e3c9_31%,#d8e8c4_37%,#cce3d4_45%,#cbe6ee_56%,#d3e2d6_66%,#cfe4dc_74%,#c9e3ee_84%,#cfe6e4_92%,#cde8d8_100%)]">
      <button className="flex h-full items-center gap-1 pb-[2px] pl-[26px] text-left text-sm leading-5">
        <svg viewBox="0 0 34 36" className="h-9 w-[34px]" aria-hidden="true">
          <defs>
            <linearGradient id="sun" x1="0" y1="0" x2="1" y2="1">
              <stop offset="0" stopColor="#ffcf0a" />
              <stop offset="1" stopColor="#ea5a00" />
            </linearGradient>
          </defs>
          <circle cx="14" cy="22" r="12.5" fill="url(#sun)" />
          <circle cx="22.5" cy="10" r="10" fill="#c42b1c" />
          <text x="22.5" y="15" fontSize="14" textAnchor="middle" fill="#ffffff">2</text>
        </svg>
        <span className="flex flex-col">
          <span className="text-[#222222]">19°C</span>
          <span className="text-[#555555]">晴朗</span>
        </span>
      </button>
      <div className="flex items-center pl-[17px]">
        <button aria-label="开始" className="mr-[18px]">
          <svg viewBox="0 0 30 30" className="h-[30px] w-[30px]" aria-hidden="true">
            <defs>
              <linearGradient id="win" x1="0" y1="0" x2="1" y2="1">
                <stop offset="0" stopColor="#4cc4f5" />
                <stop offset="1" stopColor="#0067c0" />
              </linearGradient>
            </defs>
            <path d="M0 0h14.500v14.500H0zM15.500 0H30v14.500H15.500zM0 15.500h14.500V30H0zM15.500 15.500H30V30H15.500z" fill="url(#win)" />
          </svg>
        </button>
        <div className="mr-[7px] flex h-[39px] w-[273px] items-center rounded-full border border-[#c9d6c4] bg-[#f4f9ef] pl-[13px]">
          <Search className="h-5 w-5 text-[#222222]" strokeWidth={2.2} />
          <input aria-label="搜索" placeholder="搜索" className="ml-[11px] w-0 flex-1 bg-transparent text-lg outline-none placeholder:text-[#555555]" />
          <svg viewBox="0 0 58 34" className="mr-[6px] h-[34px] w-[58px]" aria-hidden="true">
            <path d="M0 28q12-9 46-9l10 6q3 3-2 7H8q-6-1-8-4z" fill="#e2b98c" />
            <path d="M4 14l11-3 11-2 3 15-12 3-9 3z" fill="#f7f7f0" stroke="#4f9e5a" strokeWidth="1.5" />
            <path d="M15 11l4 16M8 17l6-2M9 21l6-2M18 15l6-2" stroke="#a9b3a2" strokeWidth="1" />
            <path d="M20 22l9-15" stroke="#ee8a3a" strokeWidth="3" />
            <path d="M28 9l2-4" stroke="#e85a5a" strokeWidth="3" />
            <rect x="38" y="5" width="16" height="26" rx="6" fill="#1273ec" />
            <path d="M42 5q4-8 8 0" stroke="#1260c8" strokeWidth="2" fill="none" />
            <path d="M40 19h12v9H40z" fill="#0953b8" />
            <path d="M42 10h8" stroke="#4cb0ff" strokeWidth="2" />
            <circle cx="46" cy="17" r="1.5" fill="#8fd0ff" />
          </svg>
        </div>
        <TaskButton name="Edge" dot>
          <defs>
            <linearGradient id="edge" x1="0" y1="0" x2="1" y2="0.3">
              <stop offset="0" stopColor="#1f9fe0" />
              <stop offset="0.6" stopColor="#2fc4a0" />
              <stop offset="1" stopColor="#6be04a" />
            </linearGradient>
          </defs>
          <path d="M1 16C1 7 8 0 16 0s16 6 16 13c0 5-4 7-8 7s-5-2-4-4c0-4-3-6-7-6-6 0-9 3-12 6z" fill="url(#edge)" />
          <path d="M1 17c1-5 6-8 11-7-5 3-3 10 1 13 4 3 10 3 17-1-3 6-8 9-13 9C8 31 1 25 1 17z" fill="#1368b8" />
          <rect x="1" y="20" width="16" height="12" rx="1.5" fill="#c06a10" />
          <path d="M5 20v-2h8v2M1 25h16" stroke="#7d3c00" strokeWidth="1.5" />
        </TaskButton>
        <TaskButton name="Outlook">
          <path d="M17 2l14 9v17q0 2-2 2H10q-2 0-2-2V10z" fill="#1384d8" />
          <path d="M17 2l8 5-15 14-1-11z" fill="#1a5db0" />
          <path d="M31 12v16q0 2-2 2H12z" fill="#3ac0f2" />
          <rect x="1" y="10" width="15" height="15" rx="2" fill="#0f5fb8" />
          <ellipse cx="8.5" cy="17.5" rx="3.5" ry="4.2" stroke="#ffffff" strokeWidth="2" />
        </TaskButton>
        <TaskButton name="Microsoft 365">
          <defs>
            <linearGradient id="copilotA" x1="0" y1="0" x2="0" y2="1">
              <stop offset="0" stopColor="#4a5fd0" />
              <stop offset="1" stopColor="#b79cf0" />
            </linearGradient>
            <linearGradient id="copilotB" x1="0" y1="0" x2="0" y2="1">
              <stop offset="0" stopColor="#58b4f5" />
              <stop offset="1" stopColor="#3d6fe0" />
            </linearGradient>
          </defs>
          <path d="M17 1L6 7q-3 2-3 5v9q0 3 3 5l5 3 1-16q0-3 3-5l6-4q-2-3-4-3z" fill="url(#copilotA)" />
          <path d="M17 1q2-1 4 1l6 4q3 2 3 5v9l-9-5v-5l-6-3q-2-2 2-6z" fill="url(#copilotB)" />
          <path d="M30 18v2q0 3-3 5l-8 5q-3 2-6 0l-6-4q6 1 9-1l5-3v-7z" fill="#8a4fc0" />
        </TaskButton>
        <TaskButton name="文件资源管理器" dot>
          <path d="M1 5q0-2 2-2h9l3 4h14q2 0 2 2v19q0 2-2 2H1z" fill="#e5a50a" />
          <path d="M1 10h30v20H1z" fill="#ffd04a" />
          <path d="M7 30v-6q0-2 2-2h14q2 0 2 2v6z" fill="#1a7fd4" />
          <path d="M11 26h10" stroke="#0b4f90" strokeWidth="2" />
        </TaskButton>
        <TaskButton name="Fusion" active>
          <path d="M5 0h24q2 0 2 2v28q0 2-2 2H5l-3-2V2z" fill="#ff6b00" />
          <path d="M5 21h26v9q0 2-2 2H5z" fill="#8c3500" />
          <text x="18" y="17" fontSize="16" fontWeight="700" textAnchor="middle" fill="#ffffff">F</text>
          <text x="18" y="30" fontSize="8" fontWeight="700" textAnchor="middle" fill="#ffffff">FUS</text>
        </TaskButton>
        <TaskButton name="微信" dot>
          <path d="M12 3c6 0 11 4 11 10s-5 10-11 10l-4 0-4 3 1-5c-3-2-4-5-4-8C1 7 6 3 12 3z" fill="#2dd263" />
          <circle cx="8" cy="10" r="1.5" fill="#12692f" />
          <circle cx="16" cy="10" r="1.5" fill="#12692f" />
          <path d="M22 12c5 0 9 3.500 9 8 0 2-1 4-2 5l1 4-4-2c-9 3-13-2-13-7s4-8 9-8z" fill="#ececec" />
          <circle cx="19" cy="18" r="1.2" fill="#777777" />
          <circle cx="25" cy="18" r="1.2" fill="#777777" />
        </TaskButton>
        <TaskButton name="Clash" dot>
          <path d="M9 5l4 4h7l4-4v10q-2 2-1 4l2 8H10l1-8q1-3-2-5z" fill="#1b2f57" />
          <path d="M11 26H7q-3-1-3-4 1-2 3-2" stroke="#1b2f57" strokeWidth="1.5" />
          <circle cx="14" cy="13" r="1" fill="#dddddd" />
          <circle cx="19" cy="13" r="1" fill="#dddddd" />
        </TaskButton>
      </div>
      <div className="flex items-center justify-end pr-[23px] text-[#1a1a1a]">
        <button aria-label="显示隐藏的图标" className="mr-5">
          <ChevronUp className="h-5 w-5" strokeWidth={1.8} />
        </button>
        <button aria-label="网络、音量和电池" className="flex items-center gap-[10px]">
          <Wifi className="h-5 w-5" strokeWidth={1.8} />
          <svg viewBox="0 0 20 20" className="h-5 w-5" fill="none" stroke="#1a1a1a" strokeWidth="1.3" aria-hidden="true">
            <path d="M1 7.5h4l5-4.500v14l-5-4.500H1zM13 7.5l5 5M18 7.5l-5 5" />
          </svg>
          <svg viewBox="0 0 20 14" className="h-[14px] w-5" fill="none" aria-hidden="true">
            <rect x="1" y="1" width="16" height="12" rx="3" stroke="#1a1a1a" strokeWidth="1.5" />
            <rect x="3" y="3" width="10" height="8" rx="1" fill="#1a1a1a" />
            <path d="M19 5v4" stroke="#1a1a1a" strokeWidth="2" />
          </svg>
        </button>
        <button className="ml-[22px] text-right text-sm leading-5">
          <span className="block">14:50</span>
          <span className="block">2025/4/3</span>
        </button>
        <button aria-label="通知中心" className="ml-[9px]">
          <Bell className="h-5 w-5 fill-[#0a5fa8] text-[#0a5fa8]" />
        </button>
      </div>
    </footer>
  );
}

export default function App() {
  return (
    <div className='flex h-screen flex-col overflow-hidden bg-[#f1f1f1] font-["Open_Sans","Noto_Sans_CJK_SC",sans-serif] text-[#333333]'>
      <TitleBar />
      <TabBar />
      <MenuTabs />
      <Ribbon />
      <main className="flex min-h-0 flex-1">
        <div className="flex min-w-0 flex-1 flex-col">
          <div className="flex h-[46px] shrink-0 items-center pt-1 pr-[9px] pb-[2px] pl-[10px]">
            <div className="relative flex h-[33px] w-[264px] items-center border-2 border-[#aaaaaa] bg-white">
              <span className="ml-1 h-[25px] w-[25px] shrink-0 bg-[#a00a0a]" />
              <select aria-label="层" className="h-full w-full appearance-none bg-transparent pl-2 text-[15px] text-[#222222]">
                <option>1 Top</option>
              </select>
              <Caret className="pointer-events-none absolute right-[5px] h-[7px] w-2 fill-[#666666]" />
            </div>
            <span className="ml-[23px] w-[164px] text-[15px] whitespace-nowrap">50 mil (4250 1750)</span>
            <div className="relative flex flex-1 items-center">
              <input
                aria-label="命令行"
                placeholder="单击或按 / 键以激活命令行模式"
                className="h-[33px] w-full border-2 border-[#b0b0b0] bg-transparent pl-2 text-[15px] placeholder:text-[#bbbbbb]"
              />
              <Caret className="pointer-events-none absolute right-[6px] h-[7px] w-2 fill-[#666666]" />
            </div>
          </div>
          <div className="relative flex min-h-0 flex-1">
            <div className='relative flex-1 overflow-hidden bg-black font-["Liberation_Sans",sans-serif]'>
              <Board />
            </div>
            <div className="flex w-[19px] flex-col bg-[#fafafa]">
              <div className="h-[209px]" />
              <div className="flex h-[487px] justify-center bg-[#f1f1f1]">
                <div className="w-2 rounded-full bg-[#8f8f8f]" />
              </div>
            </div>
            <FloatingToolbar />
          </div>
          <div className="flex h-5 shrink-0 items-center bg-[#fafafa] pl-[135px]">
            <div className="flex h-5 flex-1 items-center bg-[#f1f1f1]">
              <div className="h-2 w-full rounded-full border-b border-[#c0c0c0] bg-[#999999]" />
            </div>
            <div className="flex w-[114px] justify-end pr-px">
              <svg viewBox="0 0 20 20" className="h-5 w-5" aria-hidden="true">
                <circle cx="10" cy="10" r="10" fill="#000000" />
                <path d="M4 14l7-8M8 14l6-8M12 13l4-5M6 11h9" stroke="#ffffff" strokeWidth="1.3" fill="none" />
              </svg>
            </div>
          </div>
          <p className='flex h-[37px] shrink-0 items-center pt-[3px] pl-[2px] font-["Liberation_Mono","Noto_Sans_CJK_SC",monospace] text-[15px] text-black'>
            单击左键，选择对象进行旋转（Ctrl+ 右键单击，旋转组）
          </p>
        </div>
        <div className="w-[9px] shrink-0" />
        <SidePanel />
      </main>
      <Taskbar />
    </div>
  );
}
